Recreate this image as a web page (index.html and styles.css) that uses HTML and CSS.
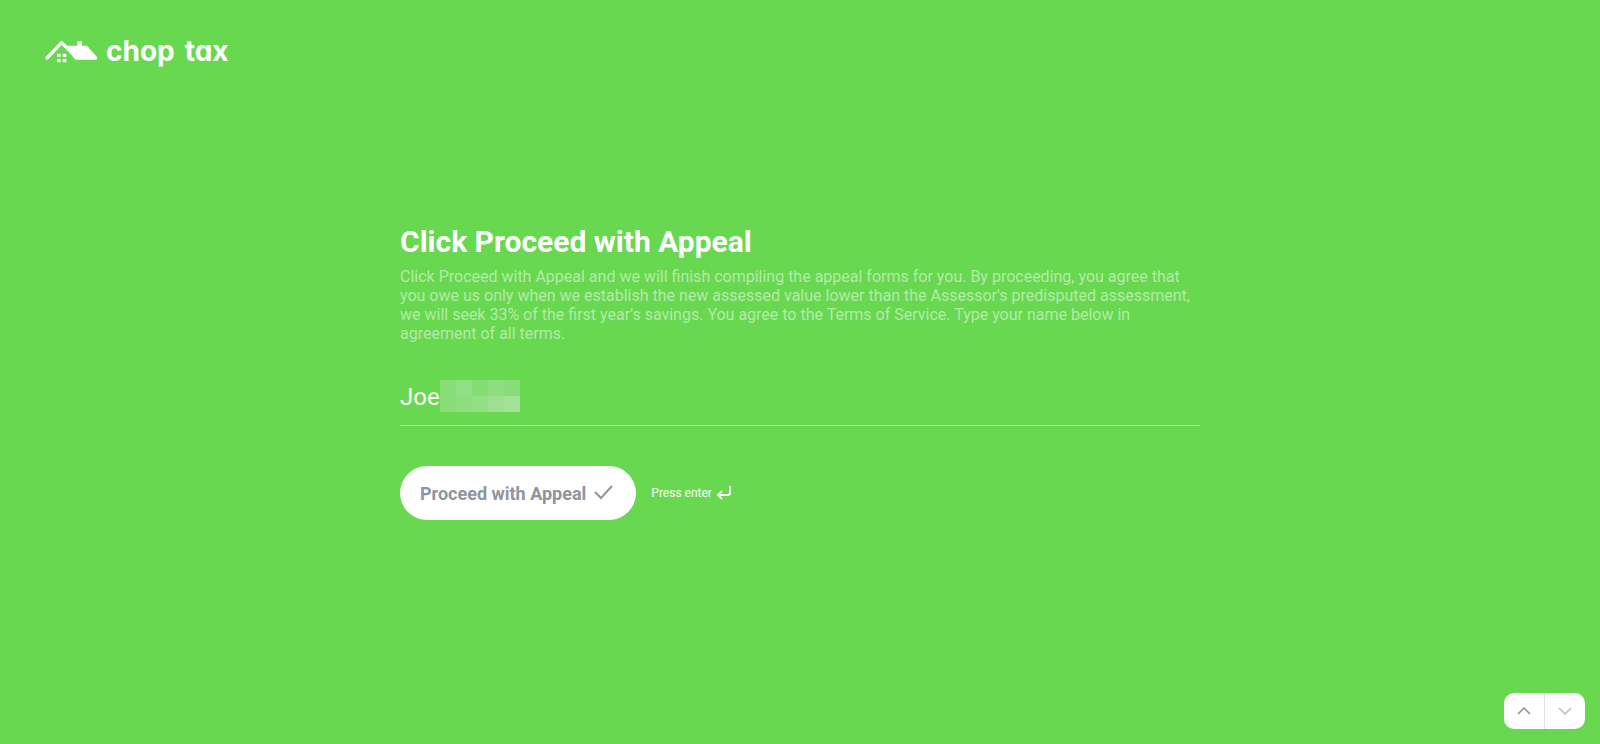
FILE: index.html
```html
<!DOCTYPE html>
<html lang="en">
  <head>
    <meta charset="utf-8" />
    <title>Chop Tax</title>
    <meta name="viewport" content="width=device-width, initial-scale=1" />
    <link rel="stylesheet" href="styles.css">
  </head>

  <body>
    <header class="header">
      <a class="logo" href="#">
        <svg class="logo-icon" viewBox="0 0 159 72" aria-hidden="true">
          <path class="roof" d="M6 54 L50 8 L70 28" />
          <path class="roof-fill" d="M52 7 L66 17 H97 V3 H111 V17 H126 L156 51 Q159 59 151 59 H94 Q91 59 89 56 L54 16 Z" />
          <path class="window" d="M36 41h11v10h-11z M53 41h11v10h-11z M36 57h11v10h-11z M53 57h11v10h-11z" />
        </svg>
        <span class="logo-text"><span>chop</span> <span>tax</span></span>
      </a>
    </header>

    <main class="main">
      <form class="question">
        <h1 class="title">Click Proceed with Appeal</h1>
        <label class="description" for="name">Click Proceed with Appeal and we will finish compiling the appeal forms for you. By proceeding, you agree that you owe us only when we establish the new assessed value lower than the Assessor's predisputed assessment, we will seek 33% of the first year's savings. You agree to the Terms of Service. Type your name below in agreement of all terms.</label>
        <div class="field">
          <input class="field-input" type="text" id="name" value="Joe" />
          <div class="mask">
            <i class="m2"></i><i class="m4"></i><i class="m1"></i><i class="m3"></i><i class="m2"></i>
            <i class="m2"></i><i class="m3"></i><i class="m4"></i><i class="m5"></i><i class="m6"></i>
          </div>
        </div>
        <div class="actions">
          <button class="submit" type="button">
            Proceed with Appeal
            <svg width="20" height="16" viewBox="0 0 20 16" aria-hidden="true">
              <path d="M1 7 L7 13 L18 1" />
            </svg>
          </button>
          <span class="hint">
            Press enter
            <svg class="enter" width="16" height="16" viewBox="0 0 16 16" aria-hidden="true">
              <path d="M14 1 V8 Q14 10 12 10 H2 M6 6 L2 10 L6 14" />
            </svg>
          </span>
        </div>
      </form>
    </main>

    <nav class="pager">
      <button class="pager-button" type="button" aria-label="Previous">
        <svg width="14" height="8" viewBox="0 0 14 8"><path d="M1 7 L7 1 L13 7" /></svg>
      </button>
      <button class="pager-button next" type="button" aria-label="Next">
        <svg width="14" height="8" viewBox="0 0 14 8"><path d="M1 1 L7 7 L13 1" /></svg>
      </button>
    </nav>
  </body>
</html>
```
FILE: styles.css
```css
* {
  box-sizing: border-box;
}
body {
  margin: 0;
  min-height: 100vh;
  display: grid;
  grid-template-rows: 104px 1fr 104px;
  background-color: #67d850;
  color: #fff;
  font-family: Roboto, "Liberation Sans", sans-serif;
}
button,
input {
  font-family: inherit;
}
svg {
  fill: none;
  stroke: currentColor;
  stroke-width: 2;
}

/* header */
.header {
  display: flex;
  align-items: center;
  padding: 0 45px;
}
.logo {
  display: flex;
  align-items: center;
  gap: 8px;
  color: #fff;
  text-decoration: none;
}
.logo-icon {
  width: 53px;
  height: 24px;
}
.roof {
  stroke-width: 10;
  stroke-linecap: round;
  stroke-linejoin: round;
}
.roof-fill,
.window {
  fill: #fff;
  stroke: none;
}
.logo-text {
  display: flex;
  gap: 10px;
  padding-bottom: 2px;
  font-family: Inter, sans-serif;
  font-feature-settings: "cv11";
  font-size: 28px;
  line-height: 32px;
  font-weight: 700;
}

/* question */
.main {
  display: flex;
  align-items: center;
  justify-content: center;
  padding: 0 40px;
}
.question {
  width: 100%;
  max-width: 800px;
}
.title {
  margin: 0 0 8px;
  font-size: 30px;
  line-height: 35px;
  font-weight: 700;
}
.description {
  display: block;
  font-size: 16px;
  line-height: 19px;
  color: rgba(255, 255, 255, 0.5);
}
.field {
  position: relative;
  margin-top: 32px;
}
.field-input {
  display: block;
  width: 100%;
  height: 51px;
  padding: 0 0 6px;
  border: 0;
  border-bottom: 1px solid #d3dccf;
  border-radius: 0;
  background: none;
  color: #fff;
  font-size: 24px;
  outline: none;
}
.mask {
  position: absolute;
  left: 40px;
  top: 5px;
  display: grid;
  grid-template-columns: repeat(5, 16px);
  grid-auto-rows: 16px;
}
.m1 { background-color: #83dd73; }
.m2 { background-color: #88dd79; }
.m3 { background-color: #8ede7f; }
.m4 { background-color: #92df85; }
.m5 { background-color: #9be190; }
.m6 { background-color: #a2e398; }

/* actions */
.actions {
  display: flex;
  align-items: center;
  gap: 15px;
  margin-top: 40px;
}
.submit {
  display: flex;
  align-items: center;
  gap: 8px;
  height: 54px;
  padding: 0 22px 0 20px;
  border: 0;
  border-radius: 27px;
  background-color: #fff;
  color: #8f949e;
  font-size: 18px;
  font-weight: 700;
}
.hint {
  display: flex;
  align-items: center;
  gap: 4px;
  font-size: 12px;
}
.enter {
  stroke-width: 1.8;
}

/* pager */
.pager {
  display: flex;
  align-self: end;
  justify-self: end;
  margin: 0 15px 15px 0;
  border-radius: 10px;
  overflow: hidden;
  background-color: #fff;
}
.pager-button {
  display: flex;
  align-items: center;
  justify-content: center;
  width: 40px;
  height: 36px;
  padding: 0;
  border: 0;
  background: none;
  color: #8f949e;
}
.pager-button svg {
  stroke-width: 1.6;
}
.next {
  width: 41px;
  border-left: 1px solid #e2e3e6;
  color: #bcc0c8;
}
```
